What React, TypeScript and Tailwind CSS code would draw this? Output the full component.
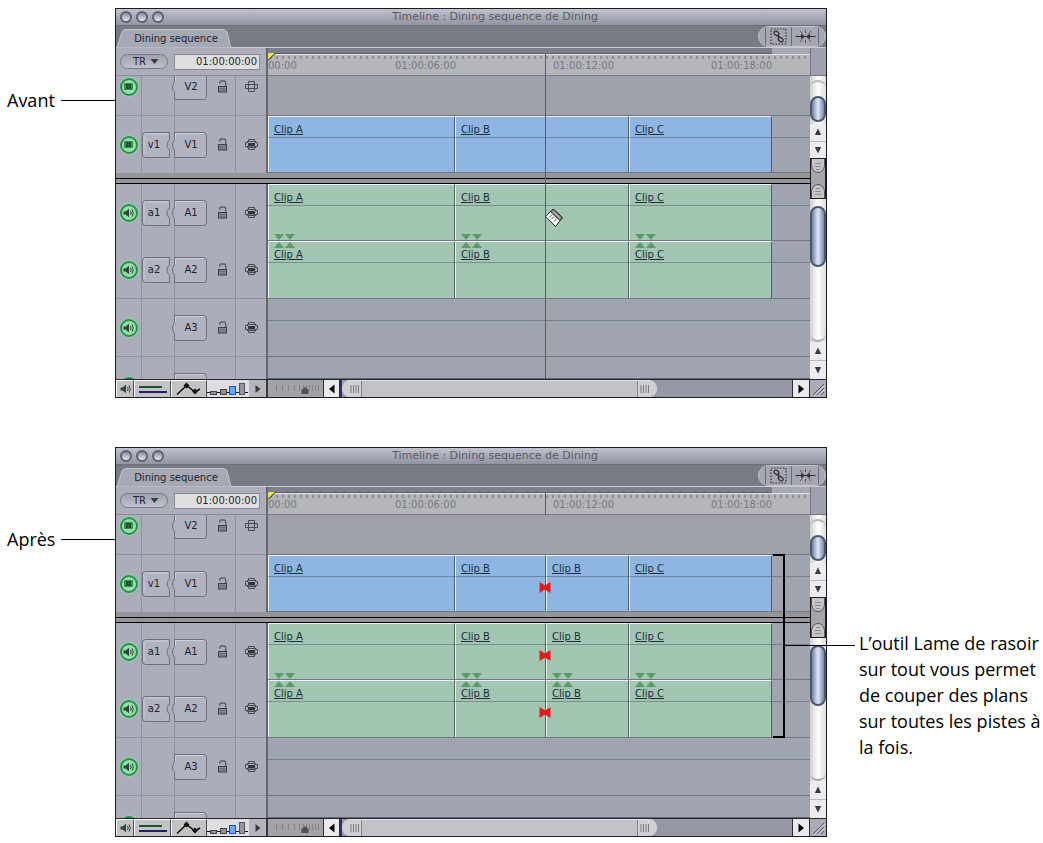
import React, { FC, ReactNode } from "react";

interface IClip {
  name: string;
  length: number;
}

interface ITrack {
  name: string;
  label?: string;
  source?: string;
  kind: "video" | "audio";
  height: string;
  align?: string;
  hollow?: boolean;
  filled?: boolean;
  pairTop?: boolean;
  pairBottom?: boolean;
}

// visible length of the timeline, same unit as the clip lengths
const VISIBLE = 542;

const before: IClip[] = [
  { name: "Clip A", length: 187 },
  { name: "Clip B", length: 174 },
  { name: "Clip C", length: 143 },
];

const after: IClip[] = [
  { name: "Clip A", length: 187 },
  { name: "Clip B", length: 91 },
  { name: "Clip B", length: 83 },
  { name: "Clip C", length: 143 },
];

const videoTracks: ITrack[] = [
  { name: "V2", label: "V2", kind: "video", height: "h-10", align: "items-end", hollow: true },
  { name: "V1", label: "V1", source: "v1", kind: "video", height: "h-[57px]", filled: true },
];

// the fourth audio track is only half scrolled in, its label is below the fold
const audioTracks: ITrack[] = [
  { name: "A1", label: "A1", source: "a1", kind: "audio", height: "h-[57px]", filled: true, pairBottom: true },
  { name: "A2", label: "A2", source: "a2", kind: "audio", height: "h-[58px]", filled: true, pairTop: true },
  { name: "A3", label: "A3", kind: "audio", height: "h-[58px]" },
  { name: "A4", kind: "audio", height: "h-[22px]" },
];

const percent = (n: number) => `${(n / VISIBLE) * 100}%`;

const Speaker = () => (
  <svg width="11" height="10" viewBox="0 0 11 10" fill="none">
    <path d="M0.5 3.5h2L6 0.8v8.4L2.5 6.5h-2z" fill="#34433b" />
    <path d="M7.5 3q1.4 2 0 4M9 1.4q2.6 3.6 0 7.2" stroke="#34433b" strokeWidth="1" />
  </svg>
);

const Film = () => (
  <svg width="9" height="7" viewBox="0 0 9 7">
    <rect width="9" height="7" rx="1" fill="#3f8a57" />
    <rect x="2" y="1" width="5" height="5" fill="#1c4f2d" />
    <path d="M2 3.5h5M4.5 1v5" stroke="#2f7044" strokeWidth="0.6" />
  </svg>
);

const Lock = () => (
  <svg width="11" height="13" viewBox="0 0 11 13" fill="none">
    <path d="M2.8 3.8V2.5Q2.8 1 4.3 1H7Q8.7 1 8.7 2.7V6.5" stroke="#5b5d67" strokeWidth="1.4" />
    <rect x="1.5" y="6.5" width="8" height="5.5" fill="#8b8d97" stroke="#3b3d44" />
    <path d="M2.5 8.5h6M2.5 10.2h6" stroke="#5c5e68" strokeWidth="0.7" />
  </svg>
);

const AutoSelect: FC<{ hollow?: boolean }> = ({ hollow }) => (
  <svg width="13" height="13" viewBox="0 0 13 13" fill="none" stroke="#4a4c54">
    <path d="M3.5 4V1.5H9.5V4M3.5 9V11.5H9.5V9" />
    <path d="M3 4.5H.5V8.5H3M10 4.5H12.5V8.5H10" />
    {hollow ? (
      <path d="M2 4.5H11M2 8.5H11M3.5 4V9M9.5 4V9" />
    ) : (
      <>
        <path d="M2 3.5H11M2 9.5H11" />
        <rect x="3" y="5" width="7" height="3.5" fill="#34363c" stroke="none" />
      </>
    )}
  </svg>
);

const Arrow: FC<{ d: string }> = ({ d }) => (
  <svg width="8" height="8" viewBox="0 0 8 8">
    <path d={d} fill="#3a3a3f" />
  </svg>
);

const UP = "M4 0.5L7.2 7H0.8z";
const DOWN = "M4 7.5L7.2 1H0.8z";

const SourcePatch: FC<{ name: string }> = ({ name }) => (
  <button className="relative w-8 h-[26px] pr-2 block text-[10px] text-[#202229]">
    <svg className="absolute left-0 top-0" width="32" height="26" viewBox="0 0 32 26">
      <path
        d="M3.5 .5H27.5V7.5Q22.5 13 27.5 18.5V25.5H3.5Q.5 25.5 .5 22.5V3.5Q.5 .5 3.5 .5z"
        fill="#b1b3c0"
        stroke="#6d6f7c"
      />
      <path d="M2 22V3.5Q2 2 3.5 2H26" fill="none" stroke="#cfd0da" />
    </svg>
    <span className="relative">{name}</span>
  </button>
);

const DestPatch: FC<{ track: ITrack }> = ({ track }) => (
  <button
    aria-label={track.name}
    className="relative -ml-1 w-9 h-[26px] pl-1 block text-[10px] text-[#202229]"
  >
    <svg className="absolute left-0 top-0" width="36" height="26" viewBox="0 0 36 26">
      <path
        d="M3.5 .5H32.5Q35.5 .5 35.5 3.5V22.5Q35.5 25.5 32.5 25.5H3.5V18.5Q-.5 13 3.5 7.5z"
        fill="#b1b3c0"
        stroke="#6d6f7c"
      />
      <path d="M4.5 7V1.5H32.5" fill="none" stroke="#cfd0da" />
    </svg>
    {track.label && <span className="relative">{track.label}</span>}
  </button>
);

const TrackHeader: FC<{ track: ITrack }> = ({ track }) => (
  <div
    className={`w-[152px] shrink-0 flex overflow-hidden bg-[#abadbb] border-r-2 border-[#65676f] ${
      track.align || "items-start"
    }`}
  >
    <div className="h-[58px] w-[26px] border-r border-b border-[#8f919e] flex items-center justify-center">
      <button
        aria-label={`${track.name} visible`}
        className="size-[18px] rounded-full border-2 border-[#2a8e4e] bg-[#92dfa8] ring-1 ring-[#9ccfae] flex items-center justify-center"
      >
        {track.kind === "video" ? <Film /> : <Speaker />}
      </button>
    </div>
    <div className="h-[58px] w-[33px] border-r border-b border-[#8f919e] flex items-center">
      {track.source && <SourcePatch name={track.source} />}
    </div>
    <div className="h-[58px] w-[61px] border-r border-b border-[#8f919e] flex items-center">
      <DestPatch track={track} />
      <button aria-label={`Lock ${track.name}`} className="ml-[10px]">
        <Lock />
      </button>
    </div>
    <div className="h-[58px] w-[30px] border-b border-[#8f919e] flex items-center justify-center">
      <button aria-label={`Auto select ${track.name}`}>
        <AutoSelect hollow={track.hollow} />
      </button>
    </div>
  </div>
);

const Pair: FC<{ up?: boolean }> = ({ up }) => (
  <svg className="block" width="21" height="6" viewBox="0 0 21 6" fill="#5b9a6c">
    {up ? <path d="M0 6L5 0L10 6zM11 6L16 0L21 6z" /> : <path d="M0 0H10L5 6zM11 0H21L16 6z" />}
  </svg>
);

const CutMark = () => (
  <svg className="absolute z-10 -right-[6px] top-[26px]" width="12" height="11" viewBox="0 0 12 11">
    <path d="M0.5 0L6 3.5L11.5 0V11L6 7.5L0.5 11z" fill="#e3191b" />
  </svg>
);

const Lane: FC<{ track: ITrack; clips: IClip[]; cut?: boolean }> = ({ track, clips, cut }) => (
  <div
    className={`relative flex-1 min-w-0 flex border-b border-[#74777f] ${
      track.name === "V2" ? "bg-[#9fa2aa]" : "bg-[#9fa4af]"
    }`}
  >
    {track.filled &&
      clips.map((clip, i) => (
        <div
          key={i}
          style={{ width: percent(clip.length) }}
          className={`relative border-t border-l border-r border-t-[#e9f2f4] border-l-[#e9f2f4] border-r-[#55605f] pl-[5px] flex flex-col text-[10px] ${
            track.kind === "video" ? "bg-[#8fb6e3]" : "bg-[#a3c6b2]"
          }`}
        >
          <div className="h-[7px]">{track.pairTop && <Pair up />}</div>
          <span className="leading-3 underline text-[#1b2f3a]">{clip.name}</span>
          <div className="mt-auto">{track.pairBottom && <Pair />}</div>
          {cut && i === 1 && <CutMark />}
        </div>
      ))}
    {track.name !== "V2" && (
      <div className="absolute inset-x-0 top-[21px] border-t border-[#4a5a6a]/50"></div>
    )}
  </div>
);

const TrackRow: FC<{ track: ITrack; clips: IClip[]; cut?: boolean }> = (props) => (
  <div className={`flex overflow-hidden ${props.track.height}`}>
    <TrackHeader track={props.track} />
    <Lane {...props} />
  </div>
);

const Ruler: FC = () => (
  <div className="relative flex-1 min-w-0 flex flex-col">
    <div className="h-[6px] flex">
      <div style={{ width: percent(504) }} className="bg-[#7c7e89] border-b border-[#5f616b]"></div>
      <div className="flex-1 bg-[#a6a8b2]"></div>
    </div>
    <div className="flex-1 bg-[#b5b6bb] border-t border-b border-t-[#e0e0e4] border-b-[#7b7d85] overflow-hidden">
      <svg className="block w-full h-[5px]">
        <defs>
          <pattern id="ticks" width="6" height="5" patternUnits="userSpaceOnUse">
            <path d="M3 1V4" stroke="#8f9097" strokeWidth="2" />
          </pattern>
        </defs>
        <rect width="100%" height="5" fill="url(#ticks)" />
      </svg>
      <div className="flex text-[10px] leading-3 text-[#76777e]">
        <span style={{ width: percent(127) }}>00:00</span>
        <span style={{ width: percent(158) }}>01:00:06:00</span>
        <span style={{ width: percent(158) }}>01:00:12:00</span>
        <span className="flex-1">01:00:18:00</span>
      </div>
    </div>
    <svg className="absolute left-0 top-[5px]" width="8" height="8" viewBox="0 0 8 8">
      <path d="M0 0H7L0 7z" fill="#f2e24e" />
      <path d="M0 7.5L7.5 0" stroke="#222" />
    </svg>
  </div>
);

const Arrows: FC<{ className: string }> = ({ className }) => (
  <div className={`flex flex-col bg-[#ececee] ${className}`}>
    <button aria-label="Up" className="flex-1 flex items-center justify-center border-b border-[#b9b9bd]">
      <Arrow d={UP} />
    </button>
    <button aria-label="Down" className="flex-1 flex items-center justify-center">
      <Arrow d={DOWN} />
    </button>
  </div>
);

const Thumb: FC<{ className: string }> = ({ className }) => (
  <div
    className={`w-4 rounded-full border-2 border-[#4a566b] bg-linear-to-r from-[#6f84a3] via-[#dfe9f6] to-[#7489a8] ${className}`}
  ></div>
);

const SideBar = () => (
  <div className="w-4 shrink-0 flex flex-col bg-[#9fa2ae]">
    <div className="h-7 border-l border-b border-[#74767f]"></div>
    <div className="h-12 bg-linear-to-r from-[#cfcfd1] via-white to-[#dcdcde] flex flex-col">
      <div className="mt-1 h-4 rounded-t-full border-t-2 border-[#b4b4b8]"></div>
      <Thumb className="h-[26px]" />
    </div>
    <Arrows className="h-[34px]" />
    <svg className="block" width="16" height="41" viewBox="0 0 16 41" fill="none">
      <rect x="0.5" y="0.5" width="15" height="40" fill="#a5a6aa" stroke="#1c1c1f" />
      <path d="M1.5 1V8Q3 14.5 8 14.5T14.5 8V1" fill="#c5c5c9" stroke="#55555b" />
      <path d="M1.5 40V33Q3 26.5 8 26.5T14.5 33V40" fill="#c5c5c9" stroke="#55555b" />
      <path d="M5 5.5h6M5 8.5h6M6 11.5h4M6 30.5h4M5 33.5h6M5 36.5h6" stroke="#8a8a90" />
    </svg>
    <div className="flex-1 pt-[7px] bg-linear-to-r from-[#cfcfd1] via-white to-[#dcdcde] flex flex-col">
      <Thumb className="h-[61px]" />
      <div className="flex-1 rounded-b-full border-b-2 border-[#a9a9ad]"></div>
    </div>
    <Arrows className="h-[37px]" />
  </div>
);

const FootButton: FC<{ label: string; className: string; children: ReactNode }> = ({
  label,
  className,
  children,
}) => (
  <button
    aria-label={label}
    className={`shrink-0 flex items-center justify-center bg-[#c3c3c6] border-t border-l border-white border-r border-r-[#4b4b50] ${className}`}
  >
    {children}
  </button>
);

const Grip = () => (
  <svg width="9" height="8" viewBox="0 0 9 8">
    <path d="M1 0v8M3.5 0v8M6 0v8M8.5 0v8" stroke="#66666b" strokeWidth="0.8" />
  </svg>
);

const Footer = () => (
  <div className="h-[18px] flex border-t border-[#26262a] bg-[#a9abb6]">
    <div className="w-[152px] shrink-0 flex">
      <FootButton label="Audio controls" className="w-[18px]">
        <Speaker />
      </FootButton>
      <FootButton label="Clip overlays" className="w-[37px]">
        <svg width="30" height="10" viewBox="0 0 30 10">
          <path d="M1 3h23" stroke="#15552f" strokeWidth="2" />
          <path d="M1 8h28" stroke="#1d2260" strokeWidth="2" />
        </svg>
      </FootButton>
      <FootButton label="Keyframes" className="w-9">
        <svg width="26" height="14" viewBox="0 0 26 14" fill="none">
          <path d="M1 12.5L10.5 3.5L19 10L24 7" stroke="#111" strokeWidth="1.5" />
          <path d="M10.5 0.6L13.5 3.6L10.5 6.6L7.5 3.6zM19 6.6L22 9.6L19 12.6L16 9.6z" fill="#111" />
        </svg>
      </FootButton>
      <button aria-label="Track height" className="w-[42px] shrink-0 bg-[#dedee2]">
        <svg className="block" width="42" height="17" viewBox="0 0 42 17">
          <path d="M0 12.5h41" stroke="#111" />
          <rect x="3.5" y="11.5" width="6" height="3" fill="#8e8f98" stroke="#444" />
          <rect x="13.5" y="9.5" width="6" height="5" fill="#8e8f98" stroke="#444" />
          <rect x="22.5" y="6.5" width="6" height="8" fill="#66a7ff" stroke="#1554c0" />
          <rect x="32.5" y="3.5" width="5" height="11" fill="#9395a5" stroke="#555" />
        </svg>
      </button>
      <button aria-label="Layouts" className="flex-1 flex items-center justify-center bg-[#b4b5bd] border-r-2 border-[#3a3a40]">
        <Arrow d="M1.5 0L6.5 4L1.5 8z" />
      </button>
    </div>
    <svg className="block shrink-0 bg-[#a3a3a8]" width="55" height="17" viewBox="0 0 55 17">
      <path
        d="M8.5 5v6M14.5 5v6M20.5 5v6M26.5 5v6M31.5 5v6M35.5 5v6M38.5 5v6M41.5 5v6M44.5 5v6M47.5 5v6M50.5 5v6"
        stroke="#808087"
      />
      <path d="M37 7L40.5 10V14H33.5V10z" fill="#505056" />
    </svg>
    <button aria-label="Left" className="w-[17px] shrink-0 bg-[#eaeaec] border-l border-r border-[#2a2a30] flex items-center justify-center">
      <svg width="8" height="10" viewBox="0 0 8 10">
        <path d="M6.5 0.5V9.5L1 5z" fill="#000" />
      </svg>
    </button>
    <div className="flex-1 flex border-l-2 border-[#3d2a70] bg-[#9698a5]">
      <div className="w-[70%] flex bg-[#c2c3c8] rounded-full border-t border-[#e4e4e8]">
        <div className="w-5 flex items-center justify-end pr-[2px] border-r border-[#85858c] rounded-l-full bg-[#cfd0d4]">
          <Grip />
        </div>
        <div className="flex-1"></div>
        <div className="w-5 flex items-center pl-[2px] border-l border-[#85858c] rounded-r-full bg-[#cfd0d4]">
          <Grip />
        </div>
      </div>
    </div>
    <button aria-label="Right" className="w-[18px] shrink-0 bg-[#eaeaec] border-l border-r border-[#2a2a30] flex items-center justify-center">
      <svg width="8" height="10" viewBox="0 0 8 10">
        <path d="M1.5 0.5V9.5L7 5z" fill="#000" />
      </svg>
    </button>
    <svg className="block shrink-0" width="16" height="17" viewBox="0 0 16 17">
      <path d="M3 15L14 4M7 15L14 8M11 15L14 12" stroke="#55565e" />
      <path d="M4 16L15 5M8 16L15 9" stroke="#d5d6dc" />
    </svg>
  </div>
);

const TitleBar = () => (
  <div className="relative h-[17px] flex items-center justify-center bg-linear-to-b from-[#c0c3ce] to-[#9194a1] border-b border-[#6c6e78]">
    <div className="absolute left-1 top-[2px] flex gap-1">
      {["Close", "Minimise", "Zoom"].map((label) => (
        <button
          key={label}
          aria-label={label}
          className="size-3 rounded-full border-2 border-[#5c6070] bg-linear-to-b from-[#8b8f9d] to-[#e6e8f0]"
        ></button>
      ))}
    </div>
    <h2 className="pl-12 text-[11px] leading-4 text-[#585a63]">Timeline : Dining sequence de Dining</h2>
  </div>
);

const TabBar = () => (
  <div className="h-[22px] flex items-end justify-between bg-[#787a84] border-b border-[#c9cad2]">
    <button className="relative w-[116px] h-[18px] pl-1 block text-[10px] leading-[17px] text-[#23252b]">
      <svg className="absolute left-0 top-0" width="116" height="19" viewBox="0 0 116 19">
        <path d="M1 19L6 3Q7 .5 10 .5H107Q110 .5 111 3L115 19z" fill="#a6a8b4" stroke="#c6c8d1" />
      </svg>
      <span className="relative">Dining sequence</span>
    </button>
    <div className="h-[21px] flex rounded-full bg-[#a5a7b2] border border-[#c3c5ce] text-[#34353b]">
      <div className="w-[7px] border-r border-[#6a6c76]"></div>
      <button aria-label="Linked selection" className="w-[26px] flex items-center justify-center border-r border-[#6a6c76]">
        <svg width="17" height="17" viewBox="0 0 17 17" fill="none" stroke="currentColor">
          <rect x="1" y="1" width="15" height="15" strokeDasharray="1.5 1.5" strokeWidth="1.2" />
          <rect x="3.8" y="3.6" width="5.4" height="3.6" rx="1.8" transform="rotate(40 6.5 5.4)" strokeWidth="1.3" />
          <rect x="8" y="9.8" width="5.4" height="3.6" rx="1.8" transform="rotate(40 10.7 11.6)" strokeWidth="1.3" />
          <path d="M7.2 6.8L10 10.4" strokeWidth="1.5" />
        </svg>
      </button>
      <button aria-label="Snapping" className="w-[27px] flex items-center justify-center border-r border-[#6a6c76]">
        <svg width="21" height="17" viewBox="0 0 21 17" fill="none" stroke="currentColor">
          <path d="M0.5 8.5H20.5" strokeWidth="1.2" />
          <path d="M6 5.5L10 8.5L6 11.5zM15 5.5L11 8.5L15 11.5z" fill="currentColor" stroke="none" />
          <path d="M10.5 2V5M10.5 12V15M5 3L7.5 5.5M16 3L13.5 5.5M5 14L7.5 11.5M16 14L13.5 11.5" strokeWidth="0.7" />
        </svg>
      </button>
      <div className="w-[6px]"></div>
    </div>
  </div>
);

const TimelineWindow: FC<{ clips: IClip[]; cut?: boolean }> = ({ clips, cut }) => (
  <div className="flex-1 min-w-0 border border-[#1c1c20] font-['DejaVu_Sans','Noto_Sans',sans-serif]">
    <TitleBar />
    <TabBar />
    <div className="flex">
      <div className="relative flex-1 min-w-0">
        <div className="h-7 flex">
          <div className="w-[152px] shrink-0 flex items-center justify-between pl-1 pr-[6px] bg-[#acaeba] border-r-2 border-b border-r-[#65676f] border-b-[#8a8c99]">
            <button className="w-12 h-[15px] pl-1 rounded-full border border-[#777985] bg-linear-to-b from-[#a0a2ae] to-[#bfc1cb] flex items-center justify-center gap-1 text-[10px] leading-3 text-[#26282e]">
              TR
              <svg width="9" height="5" viewBox="0 0 9 5">
                <path d="M0.5 0H8.5L4.5 5z" fill="#3c3e46" />
              </svg>
            </button>
            <input
              aria-label="Timecode"
              defaultValue="01:00:00:00"
              className="w-[86px] h-4 pr-[2px] text-right text-[10px] leading-3 text-[#26282e] bg-[#dfdfe2] border border-[#868892]"
            />
          </div>
          <Ruler />
        </div>
        {videoTracks.map((track) => (
          <TrackRow key={track.name} track={track} clips={clips} cut={cut} />
        ))}
        <div className="h-[11px] flex flex-col bg-[#95959a] border-b border-black">
          <div className="h-[6px] border-b border-black"></div>
        </div>
        {audioTracks.map((track) => (
          <TrackRow key={track.name} track={track} clips={clips} cut={cut} />
        ))}
        {/* playhead */}
        <div className="absolute left-[152px] right-0 top-[6px] bottom-0 pointer-events-none">
          <div
            style={{ left: percent(277) }}
            className={`absolute top-0 border-l border-[#5a5d5e] ${cut ? "h-[22px]" : "h-full"}`}
          ></div>
          {!cut && (
            <svg style={{ left: percent(277) }} className="absolute top-[154px]" width="20" height="20" viewBox="0 0 20 20">
              <path d="M0.7 8.5L8 1L17.5 9.5L10.5 18.5z" fill="#fff" stroke="#222" />
              <path d="M8 1L17.5 9.5L15 12.5L5.5 4z" fill="#77877f" stroke="#222" strokeWidth="0.8" />
              <path d="M4.7 9L7 6.7M6.5 11L9 8.5M9 13.5L12 10.5" stroke="#333" strokeWidth="0.9" />
              <path d="M8 3.5L15 10" stroke="#dfe8e3" strokeWidth="0.8" />
            </svg>
          )}
        </div>
      </div>
      <SideBar />
    </div>
    <Footer />
  </div>
);

const Label: FC<{ children: ReactNode }> = ({ children }) => (
  <div className="w-[115px] shrink-0 pt-20 pl-[7px]">
    <p className="flex items-center gap-[6px] leading-6">
      {children}
      <span className="flex-1 border-t border-black"></span>
    </p>
  </div>
);

export default function App() {
  return (
    <main className="flex flex-col gap-[49px] pt-2 bg-white text-black text-lg font-['Open_Sans','Noto_Sans',sans-serif]">
      <section className="flex">
        <Label>Avant</Label>
        <TimelineWindow clips={before} />
        <div className="w-[216px] shrink-0"></div>
      </section>
      <section className="relative flex">
        <Label>Après</Label>
        <TimelineWindow clips={after} cut />
        <div className="w-[216px] shrink-0 pl-8 pt-[183px]">
          <p className="leading-[26px] whitespace-nowrap">
            L’outil Lame de rasoir
            <br />
            sur tout vous permet
            <br />
            de couper des plans
            <br />
            sur toutes les pistes à
            <br />
            la fois.
          </p>
        </div>
        {/* bracket over the cut tracks, with its callout line */}
        <div className="absolute right-[258px] top-[107px] w-3 h-[184px] border-2 border-l-0 border-black"></div>
        <div className="absolute right-[188px] top-[198px] w-[71px] border-t border-black"></div>
      </section>
    </main>
  );
}
